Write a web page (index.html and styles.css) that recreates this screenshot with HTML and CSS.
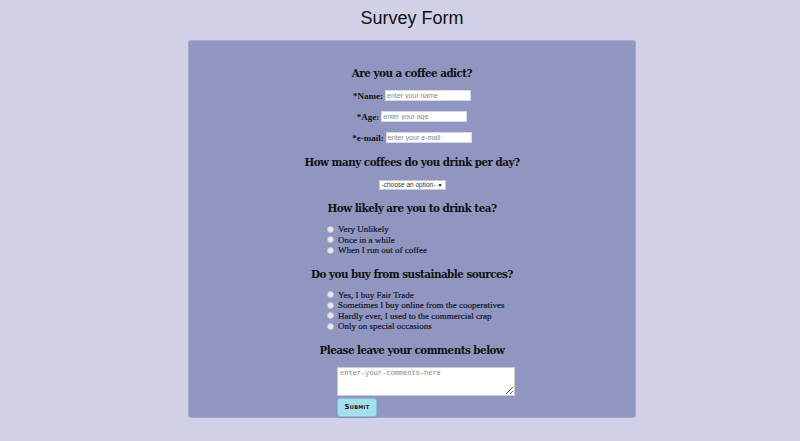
FILE: index.html
```html
<!DOCTYPE html>
<html>
<head>
<meta charset="utf-8">
<link rel="stylesheet" href="styles.css">
</head>
<body>
<div class="page">
<h1 class="title">Survey Form</h1>
<form class="survey">
  <h2 class="q q-first">Are you a coffee adict?</h2>
  <div class="field"><label>*Name:</label><input class="txt" type="text" placeholder="enter your name"></div>
  <div class="field"><label>*Age:</label><input class="txt" type="text" placeholder="enter your age"></div>
  <div class="field"><label>*e-mail:</label><input class="txt" type="text" placeholder="enter your e-mail"></div>
  <h2 class="q">How many coffees do you drink per day?</h2>
  <div class="selwrap"><div class="sel">-choose an option- <span class="arrow">&#9660;</span></div></div>
  <h2 class="q">How likely are you to drink tea?</h2>
  <div class="radios">
    <div class="opt"><span class="radio"></span>Very Unlikely</div>
    <div class="opt"><span class="radio"></span>Once in a while</div>
    <div class="opt"><span class="radio"></span>When I run out of coffee</div>
  </div>
  <h2 class="q">Do you buy from sustainable sources?</h2>
  <div class="radios">
    <div class="opt"><span class="radio"></span>Yes, I buy Fair Trade</div>
    <div class="opt"><span class="radio"></span>Sometimes I buy online from the cooperatives</div>
    <div class="opt"><span class="radio"></span>Hardly ever, I used to the commercial crap</div>
    <div class="opt"><span class="radio"></span>Only on special occasions</div>
  </div>
  <h2 class="q">Please leave your comments below</h2>
  <div class="bottom">
    <textarea class="comments" placeholder="enter-your-comments-here"></textarea>
    <button class="submit" type="button">Submit</button>
  </div>
</form>
</div>
</body>
</html>
```
FILE: styles.css
```css
html, body { margin: 0; padding: 0; }
html { overflow: hidden; }
body {
  background: #d0d0e6;
  font-family: "Liberation Serif", serif;
  color: #111;
  height: 441px;
  overflow: hidden;
}
.page {
  width: 824px;
}
.title {
  margin: 0;
  padding-top: 8px;
  height: 32px;
  box-sizing: border-box;
  text-align: center;
  font-family: "Liberation Sans", Arial, sans-serif;
  font-weight: normal;
  font-size: 18px;
  line-height: 20px;
  color: #111;
}
.survey {
  width: 448px;
  height: 378px;
  margin: 8px auto 0;
  box-sizing: border-box;
  background: #9096c0;
  border: 1px solid #a3a8cc;
  border-radius: 3px;
  display: flex;
  flex-direction: column;
  align-items: center;
}
.q {
  margin: 0;
  font-family: "DejaVu Serif Condensed", "DejaVu Serif", serif;
  font-stretch: condensed;
  font-weight: bold;
  font-size: 11.5px;
  line-height: 16px;
  letter-spacing: -0.5px;
  color: #111;
}
.q-first { margin-top: 24px; margin-bottom: 9px; }
.field {
  display: flex;
  align-items: center;
  font-size: 9px;
  font-weight: bold;
  height: 11px;
  margin-bottom: 10px;
}
.field label { margin-right: 2px; }
.txt {
  width: 86px;
  height: 11px;
  box-sizing: border-box;
  border: 1px solid #d8d8e8;
  background: #fff;
  padding: 0 1px;
  font-family: "Liberation Sans", Arial, sans-serif;
  font-size: 7px;
}
.txt::placeholder { color: #888; }
.field + .q { margin-top: 1px; }
.selwrap { margin: 10px 0 10px; }
.sel {
  height: 10px;
  width: 67px;
  box-sizing: border-box;
  background: #fff;
  border: 1px solid #ccc;
  font-family: "Liberation Sans", Arial, sans-serif;
  font-size: 6.5px;
  line-height: 8px;
  padding-left: 2px;
  color: #333;
  display: flex;
  justify-content: space-between;
}
.arrow { font-size: 5px; padding-right: 2px; color: #000; }
.radios {
  align-self: flex-start;
  margin-left: 138px;
  margin-top: 8px;
  margin-bottom: 10px;
}
.opt {
  display: flex;
  align-items: center;
  font-size: 9px;
  line-height: 10.5px;
  color: #15152a;
  -webkit-text-stroke: 0.2px #15152a;
}
.radio {
  width: 5px;
  height: 5px;
  border-radius: 50%;
  background: #e8e8ec;
  border: 1px solid #c4c4cc;
  margin-right: 4px;
}
.bottom {
  align-self: flex-start;
  margin-left: 148px;
  margin-top: 9px;
  display: flex;
  flex-direction: column;
  align-items: flex-start;
}
.comments {
  width: 178px;
  height: 29px;
  box-sizing: border-box;
  margin: 0;
  border: 1px solid #ccc;
  background: #fff;
  font-family: "Liberation Mono", monospace;
  font-size: 7px;
  padding: 1px 2px;
  resize: vertical;
}
.comments::placeholder { color: #888; }
.submit {
  margin-top: 2px;
  width: 40px;
  height: 19px;
  background: #a6dff0;
  border: 1px solid #7fbfd8;
  border-radius: 3px;
  box-shadow: 0 1px 1px rgba(0,0,0,0.15);
  font-family: "DejaVu Sans", sans-serif;
  font-weight: bold;
  font-variant: small-caps;
  font-size: 7px;
  letter-spacing: 0.3px;
  color: #111;
  padding: 0;
}
```
